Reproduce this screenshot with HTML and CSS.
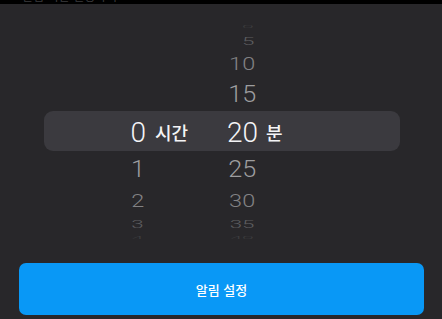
FILE: index.html
```html
<!DOCTYPE html>
<html lang="ko">
<head>
    <meta charset="UTF-8">
    <title>알림 설정</title>
    <link rel="stylesheet" href="styles.css">
</head>
<body>
    <div class="topbar"><span>알림 시간 설정하기</span></div>
    <div class="sheet">
        <div class="picker">
            <div class="band"></div>
            <div class="wheels">
                <div class="wheel wheel-hour">
                    <ul class="nums">
                        <li class="r4"></li>
                        <li class="r3"></li>
                        <li class="r2"></li>
                        <li class="r1"></li>
                        <li class="sel">0</li>
                        <li class="r1">1</li>
                        <li class="r2">2</li>
                        <li class="r3">3</li>
                        <li class="r4">4</li>
                    </ul>
                    <div class="unit">시간</div>
                </div>
                <div class="wheel wheel-min">
                    <ul class="nums">
                        <li class="r4">0</li>
                        <li class="r3">5</li>
                        <li class="r2">10</li>
                        <li class="r1">15</li>
                        <li class="sel">20</li>
                        <li class="r1">25</li>
                        <li class="r2">30</li>
                        <li class="r3">35</li>
                        <li class="r4">40</li>
                    </ul>
                    <div class="unit">분</div>
                </div>
            </div>
        </div>
        <button class="btn">알림 설정</button>
    </div>
</body>
</html>
```
FILE: styles.css
```css
*{
    box-sizing: border-box;
}
html,body{
    margin:0;
    padding:0;
    background:#000;
    height:319px;
    overflow:hidden;
}
body{
    font-family: "Noto Sans CJK KR", "Noto Sans", sans-serif;
}
.topbar{
    height:4px;
    overflow:hidden;
    padding-left:22px;
}
.topbar span{
    display:block;
    margin-top:-11px;
    font-size:12px;
    line-height:14px;
    color:#3c3c3e;
}
.sheet{
    background:#28272a;
    height:315px;
    padding-top:18px;
}
/* 휠 피커 */
.picker{
    position:relative;
    height:218px;
}
.band{
    position:absolute;
    top:89px;
    left:44px;
    right:42px;
    height:40px;
    border-radius:9px;
    background:#3b3a3f;
}
.wheels{
    position:relative;
    display:flex;
    padding-left:124px;
}
.wheel{
    display:flex;
}
.wheel-hour{
    width:99px;
}
.nums{
    list-style:none;
    margin:0;
    padding:0;
    font-family: Roboto, "Liberation Sans", sans-serif;
    font-weight:300;
    font-size:28px;
    text-align:right;
    white-space:nowrap;
}
.wheel-hour .nums{
    width:22px;
}
.wheel-min .nums{
    width:35px;
}
.nums li{
    overflow:visible;
    transform-origin:50% 50%;
}
.nums .sel{
    height:41px;
    line-height:41px;
    color:#f4f4f6;
}
.nums .r1{
    height:34px;
    line-height:34px;
    color:#9d9d9f;
    transform:scale(0.9,0.83);
}
.nums .r2{
    height:28px;
    line-height:28px;
    color:#828284;
    transform:scale(0.84,0.68);
}
.nums .r3{
    height:18px;
    line-height:18px;
    color:#5e5e60;
    transform:scale(0.8,0.42);
}
.nums .r4{
    height:10px;
    line-height:10px;
    color:#3e3e40;
    transform:scale(0.76,0.14);
}
.unit{
    padding-top:90px;
    height:130px;
    line-height:41px;
    font-size:18px;
    font-weight:500;
    color:#f4f4f6;
}
.wheel-hour .unit{
    margin-left:9px;
}
.wheel-min .unit{
    margin-left:8px;
}
.btn{
    display:block;
    margin:23px 18px 0 19px;
    width:405px;
    height:52px;
    border:0;
    border-radius:7px;
    background:#0998f6;
    color:#fff;
    font-family: "Noto Sans CJK KR", sans-serif;
    font-size:13px;
    font-weight:500;
    cursor:pointer;
}
```
